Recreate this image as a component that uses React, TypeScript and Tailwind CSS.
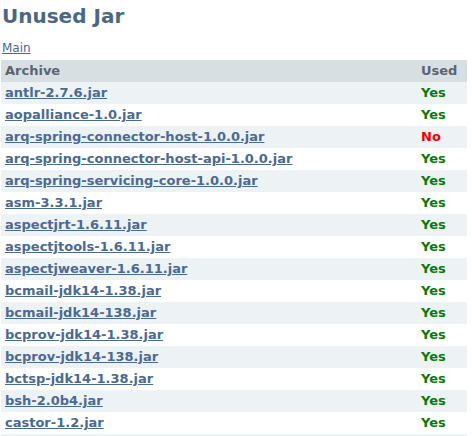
const jars: [string, boolean][] = [
  ["antlr-2.7.6.jar", true],
  ["aopalliance-1.0.jar", true],
  ["arq-spring-connector-host-1.0.0.jar", false],
  ["arq-spring-connector-host-api-1.0.0.jar", true],
  ["arq-spring-servicing-core-1.0.0.jar", true],
  ["asm-3.3.1.jar", true],
  ["aspectjrt-1.6.11.jar", true],
  ["aspectjtools-1.6.11.jar", true],
  ["aspectjweaver-1.6.11.jar", true],
  ["bcmail-jdk14-1.38.jar", true],
  ["bcmail-jdk14-138.jar", true],
  ["bcprov-jdk14-1.38.jar", true],
  ["bcprov-jdk14-138.jar", true],
  ["bctsp-jdk14-1.38.jar", true],
  ["bsh-2.0b4.jar", true],
  ["castor-1.2.jar", true],
];

const App = () => {
  return (
    <div className="px-[1px] font-['DejaVu_Sans',Verdana,sans-serif] text-[13px]">
      <h1 className="pl-[1px] pt-[4px] text-[20px] font-bold leading-[24px] text-[#4b6784]">
        Unused Jar
      </h1>
      <a href="#" className="mt-[12px] block pl-[1px] text-[12px] leading-[16px] text-[#4a6a94] underline">
        Main
      </a>
      <table className="mt-[4px] w-[466px] border-collapse">
        <thead>
          <tr className="h-[22px] bg-[#d8dfe2] text-left text-[#5b6470]">
            <th className="px-[4px] py-0 font-bold">Archive</th>
            <th className="w-[50px] px-[4px] py-0 font-bold">Used</th>
          </tr>
        </thead>
        <tbody>
          {jars.map(([name, used], i) => (
            <tr
              key={name}
              className={`h-[22px] ${i % 2 === 0 ? "bg-[#edf2f5]" : "bg-white"}`}
            >
              <td className="px-[4px] py-0">
                <a href="#" className="font-bold text-[#4a6a94] underline">
                  {name}
                </a>
              </td>
              <td
                className={`px-[4px] py-0 font-bold ${used ? "text-[#0a7a0a]" : "text-[#f00000]"}`}
              >
                {used ? "Yes" : "No"}
              </td>
            </tr>
          ))}
        </tbody>
      </table>
      <div className="h-[4px] w-[466px] bg-[#edf2f5]" />
    </div>
  );
};

export default App;
